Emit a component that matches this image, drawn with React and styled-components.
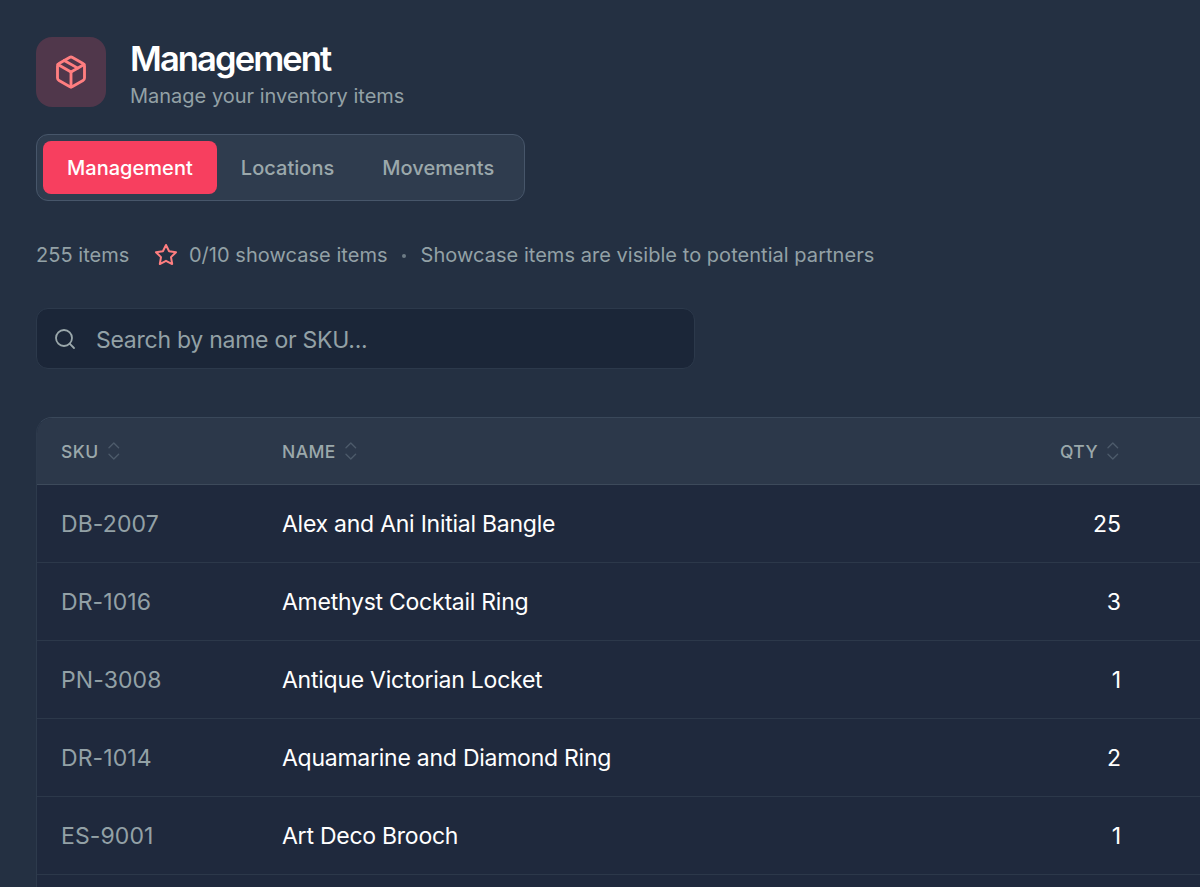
import React from 'react';
import styled, { createGlobalStyle } from 'styled-components';
import { Package, Search } from 'lucide-react';

const GlobalStyle = createGlobalStyle`
  * {
    box-sizing: border-box;
  }

  body {
    margin: 0;
    overflow: hidden;
    background: #243042;
    color: #ffffff;
    font-family: Inter, 'Liberation Sans', sans-serif;
  }
`;

const Page = styled.main`
  display: flex;
  flex-direction: column;
  width: 1200px;
  height: 887px;
  overflow: hidden;
  padding: 37px 0 0 36px;
`;

const Header = styled.header`
  display: flex;
  align-items: center;
  gap: 24px;
  height: 70px;
`;

const HeaderIcon = styled.div`
  display: flex;
  align-items: center;
  justify-content: center;
  width: 70px;
  height: 70px;
  border-radius: 16px;
  background: #50374b;
  color: #ff7e80;
`;

const Heading = styled.div`
  padding-top: 6px;
`;

const Title = styled.h1`
  margin: 0;
  font-size: 34.5px;
  line-height: 41px;
  font-weight: 600;
  letter-spacing: -1.9px;
`;

const Subtitle = styled.p`
  margin: 0;
  font-size: 20px;
  line-height: 34px;
  color: #93a1a6;
`;

const Tabs = styled.nav`
  display: flex;
  width: 489px;
  height: 67px;
  margin-top: 27px;
  padding: 6px;
  border: 1px solid #47566a;
  border-radius: 12px;
  background: #2f3c4e;
`;

const Tab = styled.button`
  height: 53px;
  padding: 0 24px;
  border: 0;
  border-radius: 8px;
  background: ${({ $active }) => ($active ? '#f73f5f' : 'transparent')};
  color: ${({ $active }) => ($active ? '#ffffff' : '#9ba8ab')};
  font: 500 20px Inter, 'Liberation Sans', sans-serif;
  letter-spacing: 0.03px;
`;

const Stats = styled.div`
  display: flex;
  align-items: center;
  height: 28px;
  margin-top: 40px;
  font-size: 20px;
  letter-spacing: 0.04px;
  color: #93a1a6;
  white-space: nowrap;
`;

const Showcase = styled.div`
  display: flex;
  align-items: center;
  gap: 11px;
  margin-left: 24.5px;

  svg {
    color: #ff7e80;
  }
`;

const Dot = styled.span`
  width: 4px;
  height: 4px;
  margin: 2px 15px 0 14px;
  border-radius: 50%;
  background: #6d7b85;
`;

const SearchField = styled.label`
  display: flex;
  align-items: center;
  gap: 19px;
  width: 659px;
  height: 61px;
  margin-top: 39px;
  padding: 0 16px;
  border: 1px solid #2c394b;
  border-radius: 12px;
  background: #1b2638;
  color: #9ba8ab;
`;

const SearchInput = styled.input`
  flex: 1;
  min-width: 0;
  padding: 2px 0 0;
  border: 0;
  outline: 0;
  background: transparent;
  color: #ffffff;
  font: 400 23px Inter, 'Liberation Sans', sans-serif;
  letter-spacing: -0.26px;

  &::placeholder {
    color: #93a1a6;
    opacity: 1;
  }
`;

const Table = styled.section`
  flex: 1;
  margin-top: 48px;
  border: 1px solid #2d3a4c;
  border-top-color: #3a485a;
  border-right: 0;
  border-bottom: 0;
  border-radius: 16px 0 0 0;
  overflow: hidden;
  background: #1f293d;
`;

const Row = styled.div`
  display: grid;
  grid-template-columns: 221px 1fr 200px;
  align-items: center;
  height: 78px;
  padding: 1px 79px 0 24px;
  border-bottom: 1px solid #2c384a;
  font-size: 23px;
`;

const HeadRow = styled(Row)`
  height: 67px;
  padding-top: 0;
  border-bottom-color: #3d4a5b;
  background: #2c384a;
`;

const HeadCell = styled.div`
  display: flex;
  align-items: center;
  justify-content: ${({ $end }) => ($end ? 'flex-end' : 'flex-start')};
  gap: 8px;
  padding-right: ${({ $end }) => ($end ? '1px' : '0')};
  color: #9ba8ab;
  font-size: 17.5px;
  font-weight: 500;
  letter-spacing: 0.4px;
`;

const Sku = styled.span`
  color: #93a1a6;
  letter-spacing: 0.1px;
`;

const Name = styled.span`
  color: #ffffff;
  letter-spacing: -0.25px;
`;

const Quantity = styled.span`
  text-align: right;
`;

const items = [
  { sku: 'DB-2007', name: 'Alex and Ani Initial Bangle', qty: 25 },
  { sku: 'DR-1016', name: 'Amethyst Cocktail Ring', qty: 3 },
  { sku: 'PN-3008', name: 'Antique Victorian Locket', qty: 1 },
  { sku: 'DR-1014', name: 'Aquamarine and Diamond Ring', qty: 2 },
  { sku: 'ES-9001', name: 'Art Deco Brooch', qty: 1 },
];

const StarIcon = () => (
  <svg width="24" height="24" viewBox="0 0 24 24" fill="none" stroke="currentColor" strokeWidth="2" strokeLinecap="round" strokeLinejoin="round">
    <polygon points="12 2 15.09 8.26 22 9.27 17 14.14 18.18 21.02 12 17.77 5.82 21.02 7 14.14 2 9.27 8.91 8.26 12 2" />
  </svg>
);

const SortIcon = () => (
  <svg width="14" height="18" viewBox="0 0 14 18" fill="none" stroke="#4c5a6a" strokeWidth="1.4" strokeLinecap="round" strokeLinejoin="round">
    <path d="m2 5.7 4.8-4.7 4.8 4.7M2 12.3l4.8 4.7 4.8-4.7" />
  </svg>
);

const App = () => (
  <>
    <GlobalStyle />
    <Page>
      <Header>
        <HeaderIcon>
          <Package size={36} strokeWidth={1.9} />
        </HeaderIcon>
        <Heading>
          <Title>Management</Title>
          <Subtitle>Manage your inventory items</Subtitle>
        </Heading>
      </Header>

      <Tabs>
        <Tab $active>Management</Tab>
        <Tab>Locations</Tab>
        <Tab>Movements</Tab>
      </Tabs>

      <Stats>
        <span>255 items</span>
        <Showcase>
          <StarIcon />
          <span>0/10 showcase items</span>
        </Showcase>
        <Dot />
        <span>Showcase items are visible to potential partners</span>
      </Stats>

      <SearchField>
        <Search size={24} strokeWidth={1.8} />
        <SearchInput placeholder="Search by name or SKU..." />
      </SearchField>

      <Table>
        <HeadRow>
          <HeadCell>SKU <SortIcon /></HeadCell>
          <HeadCell>NAME <SortIcon /></HeadCell>
          <HeadCell $end>QTY <SortIcon /></HeadCell>
        </HeadRow>
        {items.map((item) => (
          <Row key={item.sku}>
            <Sku>{item.sku}</Sku>
            <Name>{item.name}</Name>
            <Quantity>{item.qty}</Quantity>
          </Row>
        ))}
      </Table>
    </Page>
  </>
);

export default App;
